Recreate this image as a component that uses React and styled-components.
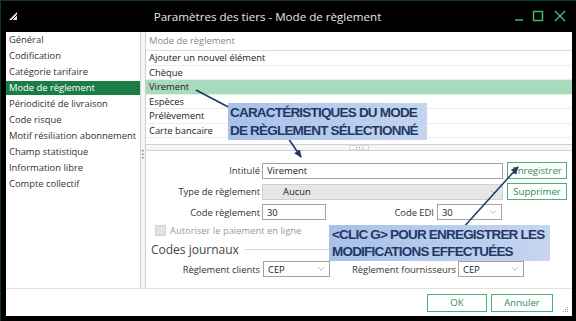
import React from "react";
import styled, { createGlobalStyle } from "styled-components";
import { ChevronDown } from "lucide-react";

const GlobalStyle = createGlobalStyle`
  html, body {
    margin: 0;
    padding: 0;
    background: #000;
  }
  body {
    font-family: "Open Sans", "Noto Sans", sans-serif;
  }
  * {
    box-sizing: border-box;
  }
`;

const Window = styled.div`
  position: relative;
  width: 576px;
  height: 321px;
  background: #000;
  box-shadow: inset 1px 1px 0 #123822;
  display: flex;
  flex-direction: column;
  padding: 0 4px 5px 6px;
  overflow: hidden;
`;

const TitleBar = styled.div`
  height: 32px;
  margin-left: -6px;
  margin-right: -4px;
  padding: 0 10px 0 9px;
  display: flex;
  align-items: center;
`;

const Title = styled.div`
  flex: 1;
  text-align: center;
  color: #e6e6e6;
  font-size: 11.6px;
  padding-left: 4px;
`;

const Body = styled.div`
  flex: 1;
  background: #fff;
  display: flex;
  flex-direction: column;
`;

const Main = styled.div`
  flex: 1;
  display: flex;
`;

const Nav = styled.div`
  width: 134px;
  padding-top: 1px;
`;

const NavItem = styled.div`
  height: 14px;
  margin-bottom: 2px;
  padding-left: 3px;
  line-height: 14px;
  font-size: 9.4px;
  white-space: nowrap;
  color: ${(p) => (p.$active ? "#fff" : "#333")};
  background: ${(p) => (p.$active ? "#1b7d45" : "transparent")};
`;

const VSplitter = styled.div`
  width: 6px;
  border-left: 1px solid #cfcfcf;
  border-right: 1px solid #cfcfcf;
  background: #f6f6f6;
  display: flex;
  justify-content: center;
  padding-top: 118px;
`;

const RightPanel = styled.div`
  flex: 1;
  display: flex;
  flex-direction: column;
`;

const List = styled.div`
  height: 112px;
`;

const ListHeader = styled.div`
  height: 19px;
  border-bottom: 1px solid #dcdcdc;
  padding-left: 3px;
  line-height: 18px;
  font-size: 9.4px;
  color: #8a8a8a;
`;

const ListRow = styled.div`
  height: 14.5px;
  border-bottom: 1px solid #ececec;
  padding-left: 3px;
  line-height: 13.5px;
  font-size: 9.4px;
  color: #222;
  background: ${(p) => (p.$selected ? "#a8dbbb" : "transparent")};
`;

const HSplitter = styled.div`
  height: 7px;
  border-top: 1px solid #d2d2d2;
  border-bottom: 1px solid #d2d2d2;
  background: #f6f6f6;
  display: flex;
  justify-content: center;
  align-items: center;
`;

const HGrip = styled.div`
  width: 20px;
  height: 5px;
  border: 1px solid #dcdcdc;
  background: #fafafa;
  display: flex;
  justify-content: center;
  align-items: center;
  gap: 2px;

  span {
    width: 1px;
    height: 1px;
    background: #888;
  }
`;

const Form = styled.div`
  flex: 1;
  padding: 11px 4px 0 0;
  display: flex;
  flex-direction: column;
  gap: 4px;
`;

const Row = styled.div`
  display: flex;
  align-items: center;
  height: ${(p) => p.$h || 16}px;
  margin-top: ${(p) => p.$mt || 0}px;
`;

const Label = styled.div`
  width: ${(p) => (p.$w ? `${p.$w}px` : "auto")};
  margin-left: ${(p) => p.$ml || 0}px;
  margin-right: ${(p) => p.$mr ?? 2}px;
  text-align: right;
  font-size: 9.4px;
  color: #333;
  white-space: nowrap;
`;

const Field = styled.div`
  width: ${(p) => p.$w}px;
  height: 16px;
  border: 1px solid ${(p) => (p.$disabled ? "#cfcfcf" : "#a3a3a3")};
  background: ${(p) => (p.$disabled ? "#e6e6e6" : "#fff")};
  padding: 0 3px 0 ${(p) => p.$pl || 4}px;
  display: flex;
  align-items: center;
  justify-content: space-between;
  font-size: 9.4px;
  color: #222;
  margin-right: ${(p) => p.$mr || 0}px;

  svg {
    color: #8a8a8a;
  }
`;

const Button = styled.div`
  width: ${(p) => p.$w}px;
  height: ${(p) => p.$h || 17}px;
  border: 1px solid #4bb174;
  background: #fff;
  color: #2e8b55;
  font-size: 9.6px;
  display: flex;
  align-items: center;
  justify-content: center;
`;

const Check = styled.div`
  width: 11px;
  height: 11px;
  margin-left: 9px;
  margin-right: 4px;
  border: 1px solid #d2d2d2;
  background: #e2e2e2;
`;

const Muted = styled.div`
  font-size: 9.4px;
  color: #9a9a9a;
`;

const Section = styled.div`
  height: 18px;
  display: flex;
  align-items: center;
  padding-left: 5px;
  margin-right: 30px;
  font-size: 12px;
  color: #444;

  &::after {
    content: "";
    flex: 1;
    height: 1px;
    background: #d8d8d8;
    margin-left: 6px;
  }
`;

const Footer = styled.div`
  position: relative;
  height: 28px;
  border-top: 1px solid #e2e2e2;
  display: flex;
  justify-content: flex-end;
  align-items: center;
  gap: 4px;
  padding-right: 19px;
`;

const ResizeGrip = styled.svg`
  position: absolute;
  right: 3px;
  bottom: 3px;
`;

const Callout = styled.div`
  position: absolute;
  left: ${(p) => p.$x}px;
  top: ${(p) => p.$y}px;
  width: ${(p) => p.$w}px;
  height: ${(p) => p.$h}px;
  padding: 1px 0 0 ${(p) => p.$pl || 2}px;
  background: linear-gradient(to right, #a9c1e8, #c5d5f0);
  font-family: "Liberation Sans", Arial, sans-serif;
  font-weight: bold;
  font-size: 13.5px;
  letter-spacing: -0.8px;
  line-height: ${(p) => p.$lh}px;
  color: #1f3864;
  white-space: nowrap;
`;

const Arrows = styled.svg`
  position: absolute;
  left: 0;
  top: 0;
  pointer-events: none;
`;

const navItems = [
  "Général",
  "Codification",
  "Catégorie tarifaire",
  "Mode de règlement",
  "Périodicité de livraison",
  "Code risque",
  "Motif résiliation abonnement",
  "Champ statistique",
  "Information libre",
  "Compte collectif",
];

const modes = [
  "Ajouter un nouvel élément",
  "Chèque",
  "Virement",
  "Espèces",
  "Prélèvement",
  "Carte bancaire",
];

const Chevron = () => <ChevronDown size={10} strokeWidth={1.5} />;

export default function App() {
  return (
    <Window>
      <GlobalStyle />
      <TitleBar>
        <svg width="8" height="8" viewBox="0 0 8 8">
          <polygon points="0,8 8,0 8,8" fill="#e0e0e0" />
          <line x1="3" y1="8" x2="8" y2="3" stroke="#000" strokeWidth="1" />
        </svg>
        <Title>Paramètres des tiers - Mode de règlement</Title>
        <svg width="52" height="12" viewBox="0 0 52 12">
          <line x1="1" y1="10" x2="9" y2="10" stroke="#41b86a" strokeWidth="1.5" />
          <rect x="19.5" y="1.5" width="9" height="9" fill="none" stroke="#41b86a" strokeWidth="1.5" />
          <line x1="41" y1="1" x2="51" y2="11" stroke="#41b86a" strokeWidth="1.5" />
          <line x1="51" y1="1" x2="41" y2="11" stroke="#41b86a" strokeWidth="1.5" />
        </svg>
      </TitleBar>
      <Body>
        <Main>
          <Nav>
            {navItems.map((n) => (
              <NavItem key={n} $active={n === "Mode de règlement"}>
                {n}
              </NavItem>
            ))}
          </Nav>
          <VSplitter>
            <svg width="2" height="9" viewBox="0 0 2 9">
              <rect x="0" y="0" width="1.5" height="1.5" fill="#777" />
              <rect x="0" y="3.5" width="1.5" height="1.5" fill="#777" />
              <rect x="0" y="7" width="1.5" height="1.5" fill="#777" />
            </svg>
          </VSplitter>
          <RightPanel>
            <List>
              <ListHeader>Mode de règlement</ListHeader>
              {modes.map((m) => (
                <ListRow key={m} $selected={m === "Virement"}>
                  {m}
                </ListRow>
              ))}
            </List>
            <HSplitter>
              <HGrip>
                <span />
                <span />
                <span />
              </HGrip>
            </HSplitter>
            <Form>
              <Row $h={17}>
                <Label $w={114}>Intitulé</Label>
                <Field $w={241} $mr={4}>Virement</Field>
                <Button $w={60}>Enregistrer</Button>
              </Row>
              <Row $h={17}>
                <Label $w={114}>Type de règlement</Label>
                <Field $w={241} $mr={4} $pl={20} $disabled>
                  Aucun
                  <Chevron />
                </Field>
                <Button $w={60}>Supprimer</Button>
              </Row>
              <Row>
                <Label $w={114}>Code règlement</Label>
                <Field $w={64}>30</Field>
                <Label $w={108} $mr={3}>Code EDI</Label>
                <Field $w={65}>
                  30
                  <Chevron />
                </Field>
              </Row>
              <Row $h={12}>
                <Check />
                <Muted>Autoriser le paiement en ligne</Muted>
              </Row>
              <Section>Codes journaux</Section>
              <Row $mt={-1}>
                <Label $w={114} $mr={3}>Règlement clients</Label>
                <Field $w={67}>
                  CEP
                  <Chevron />
                </Field>
                <Label $ml={22}>Règlement fournisseurs</Label>
                <Field $w={66}>
                  CEP
                  <Chevron />
                </Field>
              </Row>
            </Form>
          </RightPanel>
        </Main>
        <Footer>
          <Button $w={60} $h={18}>OK</Button>
          <Button $w={62} $h={18}>Annuler</Button>
          <ResizeGrip width="7" height="7" viewBox="0 0 7 7">
            <rect x="5" y="1" width="1" height="1" fill="#999" />
            <rect x="3" y="3" width="1" height="1" fill="#999" />
            <rect x="5" y="3" width="1" height="1" fill="#999" />
            <rect x="1" y="5" width="1" height="1" fill="#999" />
            <rect x="3" y="5" width="1" height="1" fill="#999" />
            <rect x="5" y="5" width="1" height="1" fill="#999" />
          </ResizeGrip>
        </Footer>
      </Body>

      <Arrows width="576" height="321" viewBox="0 0 576 321">
        <defs>
          <marker
            id="head"
            markerUnits="userSpaceOnUse"
            markerWidth="8"
            markerHeight="7"
            refX="7"
            refY="3.5"
            orient="auto"
          >
            <path d="M0,0 L8,3.5 L0,7 z" fill="#1f3864" />
          </marker>
        </defs>
        <line x1="196" y1="90" x2="234" y2="110" stroke="#1f3864" strokeWidth="1.6" />
        <line x1="288" y1="138" x2="301" y2="157" stroke="#1f3864" strokeWidth="1.6" markerEnd="url(#head)" />
        <line x1="462" y1="229" x2="518" y2="167" stroke="#1f3864" strokeWidth="1.6" markerEnd="url(#head)" />
      </Arrows>

      <Callout $x={228} $y={103} $w={199} $h={37} $lh={18}>
        CARACTÉRISTIQUES DU MODE
        <br />
        DE RÈGLEMENT SÉLECTIONNÉ
      </Callout>
      <Callout $x={329} $y={225} $w={221} $h={36} $lh={17} $pl={3}>
        &lt;CLIC G&gt; POUR ENREGISTRER LES
        <br />
        MODIFICATIONS EFFECTUÉES
      </Callout>
    </Window>
  );
}
